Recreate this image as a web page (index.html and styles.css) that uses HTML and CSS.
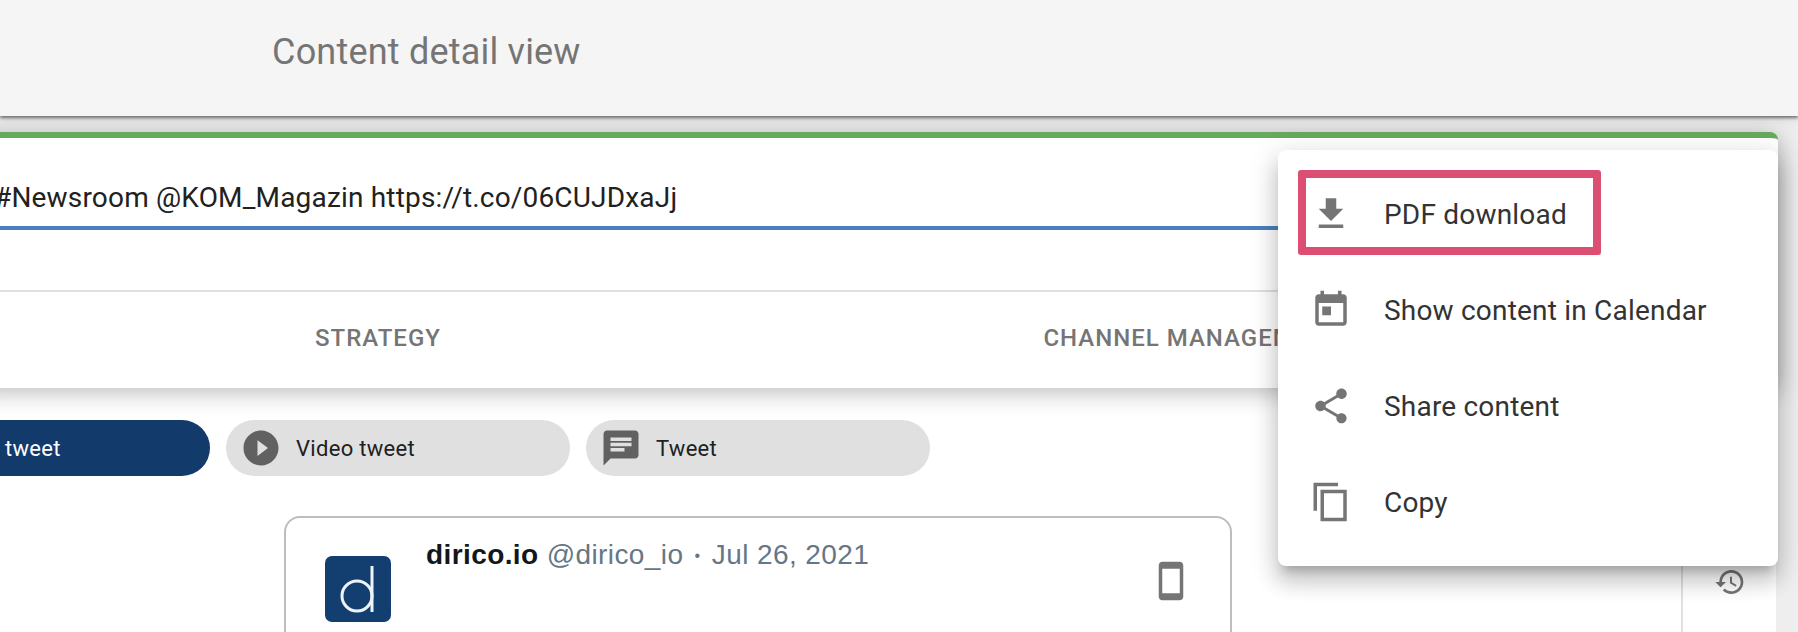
FILE: index.html
```html
<!DOCTYPE html>
<html lang="en">
<head>
    <meta charset="UTF-8">
    <meta name="viewport" content="width=device-width, initial-scale=1.0">
    <title>Content detail view</title>
    <link rel="stylesheet" href="styles.css">
</head>
<body>
    <!-- Top bar -->
    <header class="top-bar">
        <h1>Content detail view</h1>
    </header>

    <main class="page">
        <!-- Detail card -->
        <section class="detail-card">
            <div class="title-field">
                <p>#Newsroom @KOM_Magazin https://t.co/06CUJDxaJj</p>
            </div>
            <nav class="tabs">
                <div class="tab">STRATEGY</div>
                <div class="tab">CHANNEL MANAGEMENT</div>
            </nav>
        </section>

        <section class="content-row">
            <div class="content-main">
                <div class="chips">
                    <div class="chip active">
                        <span>tweet</span>
                    </div>
                    <div class="chip">
                        <svg class="icon" viewBox="0 0 24 24"><path d="M12 2C6.480 2 2 6.480 2 12s4.480 10 10 10 10-4.480 10-10S17.520 2 12 2zm-2 14.500v-9l6 4.500-6 4.500z"/></svg>
                        <span>Video tweet</span>
                    </div>
                    <div class="chip">
                        <svg class="icon" viewBox="0 0 24 24"><path d="M20 2H4c-1.100 0-1.990.9-1.990 2L2 22l4-4h14c1.100 0 2-.9 2-2V4c0-1.100-.9-2-2-2zM6 9h12v2H6V9zm8 5H6v-2h8v2zm4-6H6V6h12v2z"/></svg>
                        <span>Tweet</span>
                    </div>
                </div>

                <!-- Tweet preview -->
                <article class="tweet-card">
                    <svg class="tweet-logo" viewBox="0 0 66 66">
                        <rect width="66" height="66" rx="7" fill="#123f70"/>
                        <circle cx="32" cy="40" r="15" fill="none" stroke="#eef3f8" stroke-width="3"/>
                        <path d="M47 10v46" fill="none" stroke="#eef3f8" stroke-width="3"/>
                    </svg>
                    <div class="tweet-head">
                        <strong>dirico.io</strong>
                        <span class="handle">@dirico_io</span>
                        <span class="dot">•</span>
                        <span class="handle">Jul 26, 2021</span>
                    </div>
                    <svg class="icon phone" viewBox="0 0 24 24"><path d="M17 1.010L7 1c-1.100 0-2 .9-2 2v18c0 1.100.9 2 2 2h10c1.100 0 2-.9 2-2V3c0-1.100-.9-1.990-2-1.990zM17 19H7V5h10v14z"/></svg>
                </article>
            </div>

            <aside class="side-rail">
                <svg class="icon history" viewBox="0 0 24 24"><path d="M13 3c-4.970 0-9 4.030-9 9H1l3.890 3.890.07.14L9 12H6c0-3.870 3.130-7 7-7s7 3.130 7 7-3.130 7-7 7c-1.930 0-3.680-.79-4.940-2.060l-1.420 1.420C8.270 19.990 10.510 21 13 21c4.970 0 9-4.030 9-9s-4.030-9-9-9zm-1 5v5l4.280 2.540.72-1.210-3.500-2.080V8H12z"/></svg>
            </aside>
        </section>

        <!-- Context menu -->
        <ul class="menu">
            <li class="menu-item highlighted">
                <svg class="icon" viewBox="0 0 24 24"><path d="M19 9h-4V3H9v6H5l7 7 7-7zM5 18v2h14v-2H5z"/></svg>
                <span>PDF download</span>
            </li>
            <li class="menu-item">
                <svg class="icon" viewBox="0 0 24 24"><path d="M19 3h-1V1h-2v2H8V1H6v2H5c-1.110 0-1.990.9-1.990 2L3 19c0 1.100.89 2 2 2h14c1.100 0 2-.9 2-2V5c0-1.100-.9-2-2-2zm0 16H5V8h14v11zM7 10h5v5H7z"/></svg>
                <span>Show content in Calendar</span>
            </li>
            <li class="menu-item">
                <svg class="icon" viewBox="0 0 24 24"><path d="M18 16.080c-.76 0-1.440.3-1.960.77L8.910 12.700c.05-.23.09-.46.09-.7s-.04-.47-.09-.7l7.050-4.110c.54.5 1.250.81 2.040.81 1.660 0 3-1.340 3-3s-1.340-3-3-3-3 1.340-3 3c0 .24.04.47.09.7L8.040 9.810C7.500 9.310 6.790 9 6 9c-1.660 0-3 1.340-3 3s1.340 3 3 3c.79 0 1.500-.31 2.040-.81l7.120 4.160c-.05.21-.08.43-.08.65 0 1.610 1.310 2.920 2.920 2.920 1.610 0 2.920-1.310 2.920-2.920s-1.310-2.920-2.920-2.920z"/></svg>
                <span>Share content</span>
            </li>
            <li class="menu-item">
                <svg class="icon" viewBox="0 0 24 24"><path d="M16 1H2v16h2V3h12V1zm5 4H6v18h15V5zm-2 16H8V7h11v14z"/></svg>
                <span>Copy</span>
            </li>
        </ul>
    </main>
</body>
</html>
```

FILE: styles.css
```css
html, body {
    margin: 0;
    padding: 0;
    height: 100%;
    overflow: hidden;
}
body {
    background-color: #eeeeee;
    font-family: Roboto, sans-serif;
    color: #212121;
}
.icon {
    display: block;
    flex: none;
    width: 42px;
    height: 42px;
    fill: #757575;
}

/* Top bar */
.top-bar {
    position: relative;
    z-index: 2;
    display: flex;
    align-items: center;
    box-sizing: border-box;
    height: 116px;
    padding: 0 0 12px 272px;
    background-color: #f5f5f5;
    box-shadow: 0 2px 3px rgba(0, 0, 0, 0.5), 0 4px 10px rgba(0, 0, 0, 0.08);
}
.top-bar h1 {
    margin: 0;
    font-size: 36px;
    font-weight: 400;
    letter-spacing: 0.2px;
    color: #757575;
}

.page {
    position: relative;
    margin-left: -28px;
    margin-right: 20px;
    padding-top: 16px;
}

/* Detail card */
.detail-card {
    position: relative;
    z-index: 1;
    box-sizing: border-box;
    height: 256px;
    background-color: #fff;
    border-top: 6px solid #66aa5e;
    border-radius: 8px;
    box-shadow: 0 4px 24px rgba(0, 0, 0, 0.28);
}
.title-field {
    box-sizing: border-box;
    height: 92px;
    padding-left: 22px;
    display: flex;
    align-items: center;
    padding-top: 30px;
    border-bottom: 4px solid #4a7fbf;
}
.title-field p {
    margin: 0;
    font-size: 28px;
    letter-spacing: 0.18px;
}
.tabs {
    display: flex;
    gap: 3px;
    margin-top: 60px;
    height: 98px;
    border-top: 2px solid #e0e0e0;
    box-sizing: border-box;
}
.tab {
    flex: none;
    width: 812px;
    display: flex;
    align-items: center;
    justify-content: center;
    padding-bottom: 4px;
    box-sizing: border-box;
    font-size: 24px;
    font-weight: 500;
    letter-spacing: 1px;
    color: #757575;
}

/* Lower part */
.content-row {
    display: flex;
    height: 244px;
    margin-right: 2px;
    background-color: #fff;
}
.content-main {
    flex: 1;
    padding-top: 32px;
}
.chips {
    display: flex;
    gap: 16px;
    margin-left: -106px;
}
.chip {
    flex: none;
    display: flex;
    align-items: center;
    gap: 14px;
    box-sizing: border-box;
    width: 344px;
    height: 56px;
    padding-left: 14px;
    border-radius: 28px;
    background-color: #e0e0e0;
    font-size: 22px;
    letter-spacing: 0.3px;
    color: #212121;
}
.chip .icon {
    fill: #616161;
}
.chip.active {
    padding-left: 139px;
    background-color: #123a6b;
    color: #fff;
}

/* Tweet preview */
.tweet-card {
    display: flex;
    align-items: flex-start;
    box-sizing: border-box;
    width: 948px;
    height: 260px;
    margin: 40px 0 0 312px;
    padding: 38px 38px 0 39px;
    border: 2px solid #bdbdbd;
    border-radius: 16px;
}
.tweet-logo {
    flex: none;
    width: 66px;
    height: 66px;
}
.tweet-head {
    margin: -17px 0 0 35px;
    font-family: "Liberation Sans", Arial, sans-serif;
    font-size: 28px;
    letter-spacing: 0.4px;
    line-height: 32px;
    white-space: nowrap;
    color: #14171a;
}
.handle {
    color: #657786;
}
.dot {
    margin: 0 3px;
    color: #657786;
    font-size: 16px;
    vertical-align: 3px;
}
.phone {
    margin: 4px 0 0 auto;
}

.side-rail {
    flex: none;
    box-sizing: border-box;
    width: 95px;
    padding: 178px 0 0 31px;
    border-left: 2px solid #e0e0e0;
}
.history {
    width: 32px;
    height: 32px;
}

/* Context menu */
.menu {
    position: absolute;
    z-index: 3;
    top: 34px;
    right: 0;
    box-sizing: border-box;
    width: 500px;
    height: 416px;
    margin: 0;
    padding: 16px 0;
    list-style: none;
    background-color: #fff;
    border-radius: 8px;
    box-shadow: 0 10px 10px -6px rgba(0, 0, 0, 0.2), 0 16px 20px 2px rgba(0, 0, 0, 0.14), 0 6px 28px 4px rgba(0, 0, 0, 0.12);
}
.menu-item {
    position: relative;
    display: flex;
    align-items: center;
    gap: 32px;
    height: 96px;
    padding-left: 32px;
    font-size: 28px;
    letter-spacing: 0.2px;
    color: #333;
}
.menu-item.highlighted::after {
    content: "";
    position: absolute;
    top: 4px;
    left: 20px;
    width: 303px;
    height: 85px;
    box-sizing: border-box;
    border: 8px solid #dc4f72;
    border-radius: 3px;
}
```
